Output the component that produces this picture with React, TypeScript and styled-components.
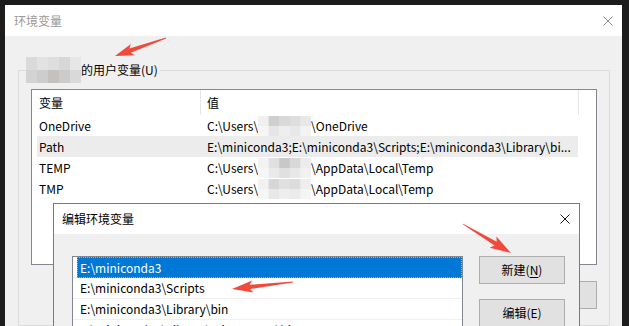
import React from "react";
import styled, { createGlobalStyle } from "styled-components";

const GlobalStyle = createGlobalStyle`
  html, body { margin: 0; padding: 0; background: #1c1c1c; }
  body {
    width: 629px; height: 326px; overflow: hidden;
    font-family: "Noto Sans CJK SC", "Noto Sans", sans-serif;
    font-size: 12px; color: #000;
  }
  * { box-sizing: border-box; }
`;

const Screen = styled.div`
  position: relative;
  width: 629px;
  height: 326px;
  padding: 5px 7px 0 5px;
  overflow: hidden;
`;

const Window = styled.div`
  position: relative;
  width: 617px;
  height: 321px;
  background: #f0f0f0;
  display: flex;
  flex-direction: column;
  overflow: hidden;
`;

const TitleBar = styled.div<{ $active?: boolean }>`
  flex: none;
  height: ${(p) => (p.$active ? "30px" : "31px")};
  background: #fff;
  display: flex;
  align-items: center;
  justify-content: space-between;
  padding: ${(p) => (p.$active ? "0 9px 0 8px" : "0 9px 0 9px")};
  color: ${(p) => (p.$active ? "#000" : "#999")};
  font-size: 12px;
  line-height: 16px;
`;

const CloseIcon = ({ color }: { color: string }) => (
  <svg width="10" height="10" viewBox="0 0 10 10">
    <path d="M0.5 0.5 L9.5 9.5 M9.5 0.5 L0.5 9.5" stroke={color} strokeWidth="1" fill="none" />
  </svg>
);

const GroupBox = styled.fieldset`
  margin: 21px 12px 0 13px;
  padding: 0;
  border: 1px solid #dcdcdc;
  min-width: 0;
  flex: 1;
`;

const Legend = styled.legend`
  margin-left: 7px;
  padding: 0 2px 0 0;
  height: 26px;
  display: flex;
  align-items: center;
  font-size: 12px;
  line-height: 16px;
`;

const GroupInner = styled.div`
  padding: 6px 12px 0 12px;
  display: flex;
  flex-direction: column;
`;

const ListView = styled.div`
  height: 176px;
  border: 1px solid #828790;
  background: #fff;
  display: flex;
  flex-direction: column;
`;

const HeaderRow = styled.div`
  display: grid;
  grid-template-columns: 169px 378px;
  height: 25px;
`;

const HeaderCell = styled.div<{ $pad: number }>`
  border-right: 1px solid #e5e5e5;
  padding-left: ${(p) => p.$pad}px;
  display: flex;
  align-items: center;
  line-height: 16px;
`;

const Row = styled.div<{ $selected?: boolean }>`
  margin-left: 5px;
  width: 541px;
  height: 21px;
  display: grid;
  grid-template-columns: 164px 377px;
  background: ${(p) => (p.$selected ? "#ececec" : "transparent")};
`;

const Cell = styled.div<{ $pad: number }>`
  padding-left: ${(p) => p.$pad}px;
  display: flex;
  align-items: center;
  white-space: nowrap;
  overflow: hidden;
  line-height: 16px;
`;

const ButtonRow = styled.div`
  margin-top: 16px;
  display: flex;
  justify-content: flex-end;
  gap: 8px;
`;

const Button = styled.div`
  width: 86px;
  height: 28px;
  background: #e1e1e1;
  border: 1px solid #adadad;
  display: flex;
  align-items: center;
  justify-content: center;
  font-size: 12px;
  line-height: 16px;
`;

const Key = styled.span`
  text-decoration: underline;
  text-underline-offset: 2px;
`;

const Dialog = styled.div`
  position: absolute;
  left: 48px;
  top: 198px;
  width: 527px;
  height: 200px;
  border: 1px solid #7a7a7a;
  background: #f0f0f0;
  display: flex;
  flex-direction: column;
`;

const DialogBody = styled.div`
  display: flex;
  gap: 16px;
  padding: 22px 14px 0 18px;
`;

const PathList = styled.div`
  width: 392px;
  height: 160px;
  border: 1px solid #828790;
  background: #fff;
`;

const PathItem = styled.div`
  height: 21px;
  border-bottom: 1px solid #f0f0f0;
  padding-left: 4px;
`;

const PathLabel = styled.div<{ $selected?: boolean }>`
  height: ${(p) => (p.$selected ? "21px" : "20px")};
  padding-left: 3px;
  display: flex;
  align-items: center;
  white-space: nowrap;
  line-height: 16px;
  color: ${(p) => (p.$selected ? "#fff" : "#000")};
  background: ${(p) => (p.$selected ? "#0078d7" : "transparent")};
  outline: ${(p) => (p.$selected ? "1px dotted #f2a04e" : "none")};
  outline-offset: -1px;
`;

const ButtonColumn = styled.div`
  display: flex;
  flex-direction: column;
  gap: 15px;
`;

const MosaicSvg = styled.svg`
  display: block;
  flex: none;
`;

const Mosaic = ({ cells, w, h }: { cells: string[][]; w: number; h: number }) => {
  const rows = cells.length;
  const cols = cells[0].length;
  const cw = w / cols;
  const ch = h / rows;
  return (
    <MosaicSvg width={w} height={h} viewBox={`0 0 ${w} ${h}`}>
      {cells.map((r, i) =>
        r.map((c, j) => (
          <rect key={`${i}-${j}`} x={j * cw} y={i * ch} width={cw + 0.5} height={ch + 0.5} fill={c} />
        ))
      )}
    </MosaicSvg>
  );
};

const Overlay = styled.svg`
  position: absolute;
  left: 0;
  top: 0;
  pointer-events: none;
`;

function arrowPoints(x1: number, y1: number, x2: number, y2: number, head = 16, hw = 6, sw = 2.2, sweep = 3) {
  const dx = x2 - x1;
  const dy = y2 - y1;
  const len = Math.hypot(dx, dy);
  const ux = dx / len;
  const uy = dy / len;
  const nx = -uy;
  const ny = ux;
  const bx = x2 - ux * head;
  const by = y2 - uy * head;
  const pts: [number, number][] = [
    [x1 + nx * 0.4, y1 + ny * 0.4],
    [bx + nx * sw, by + ny * sw],
    [bx - ux * sweep + nx * hw, by - uy * sweep + ny * hw],
    [x2, y2],
    [bx - ux * sweep - nx * hw, by - uy * sweep - ny * hw],
    [bx - nx * sw, by - ny * sw],
    [x1 - nx * 0.4, y1 - ny * 0.4],
  ];
  return pts.map((p) => `${p[0].toFixed(1)},${p[1].toFixed(1)}`).join(" ");
}

const labelMosaic = [
  ["#dadada", "#e2e2e2", "#dedede", "#d7d7d7", "#e6e6e6"],
  ["#d3d3d3", "#cdcdcd", "#c4c1be", "#cbcbcb", "#d9d9d9"],
];
const oneDriveMosaic = [
  ["#f0f0f0", "#cfcfcf", "#d8d8d8", "#dedede", "#e8e8e8"],
  ["#f6f6f6", "#e6e6e6", "#eeeeee", "#e8e8e8", "#f3f3f3"],
];
const tempMosaic = [
  ["#f3f3f3", "#e0e0e0", "#c8c8c8", "#d8d8d8", "#ececec"],
  ["#f7f7f7", "#eaeaea", "#e0e0e0", "#e8e8e8", "#f1f1f1"],
];
const tmpMosaic = [
  ["#f1f1f1", "#d6d6d6", "#e0e0e0", "#dcdcdc", "#eeeeee"],
  ["#f6f6f6", "#e8e8e8", "#eeeeee", "#ebebeb", "#f4f4f4"],
];

type VarRow = { name: string; before: string; mosaic?: string[][]; after?: string; selected?: boolean };

const vars: VarRow[] = [
  { name: "OneDrive", before: "C:\\Users\\", mosaic: oneDriveMosaic, after: "\\OneDrive" },
  { name: "Path", before: "E:\\miniconda3;E:\\miniconda3\\Scripts;E:\\miniconda3\\Library\\bi...", selected: true },
  { name: "TEMP", before: "C:\\Users\\", mosaic: tempMosaic, after: "\\AppData\\Local\\Temp" },
  { name: "TMP", before: "C:\\Users\\", mosaic: tmpMosaic, after: "\\AppData\\Local\\Temp" },
];

const paths = [
  "E:\\miniconda3",
  "E:\\miniconda3\\Scripts",
  "E:\\miniconda3\\Library\\bin",
  "E:\\miniconda3\\Library\\mingw-w64\\bin",
];

export default function App() {
  return (
    <>
      <GlobalStyle />
      <Screen>
        <Window>
          <TitleBar>
            <span>环境变量</span>
            <CloseIcon color="#8c8c8c" />
          </TitleBar>
          <GroupBox>
            <Legend>
              <Mosaic cells={labelMosaic} w={55} h={26} />
              <span>的用户变量(U)</span>
            </Legend>
            <GroupInner>
              <ListView>
                <HeaderRow>
                  <HeaderCell $pad={7}>变量</HeaderCell>
                  <HeaderCell $pad={6}>值</HeaderCell>
                </HeaderRow>
                {vars.map((v) => (
                  <Row key={v.name} $selected={v.selected}>
                    <Cell $pad={2}>{v.name}</Cell>
                    <Cell $pad={6}>
                      {v.before}
                      {v.mosaic && <Mosaic cells={v.mosaic} w={53} h={20} />}
                      {v.after}
                    </Cell>
                  </Row>
                ))}
              </ListView>
              <ButtonRow>
                <Button>新建(W)...</Button>
                <Button>编辑(I)...</Button>
                <Button>删除(D)</Button>
              </ButtonRow>
            </GroupInner>
          </GroupBox>

          <Dialog>
            <TitleBar $active>
              <span>编辑环境变量</span>
              <CloseIcon color="#1a1a1a" />
            </TitleBar>
            <DialogBody>
              <PathList>
                {paths.map((p, i) => (
                  <PathItem key={p}>
                    <PathLabel $selected={i === 0}>{p}</PathLabel>
                  </PathItem>
                ))}
              </PathList>
              <ButtonColumn>
                <Button>
                  新建(<Key>N</Key>)
                </Button>
                <Button>编辑(E)</Button>
              </ButtonColumn>
            </DialogBody>
          </Dialog>
        </Window>
        <Overlay width="629" height="326" viewBox="0 0 629 326">
          <polygon points={arrowPoints(166, 38, 115, 56, 16, 6, 2.2, 3)} fill="#ef4a3c" />
          <polygon points={arrowPoints(293, 282, 232, 289, 18, 6, 2.2, 3)} fill="#ef4a3c" />
          <polygon points={arrowPoints(463, 224, 511, 253, 18, 6.5, 2.2, 3)} fill="#ef4a3c" />
        </Overlay>
      </Screen>
    </>
  );
}
